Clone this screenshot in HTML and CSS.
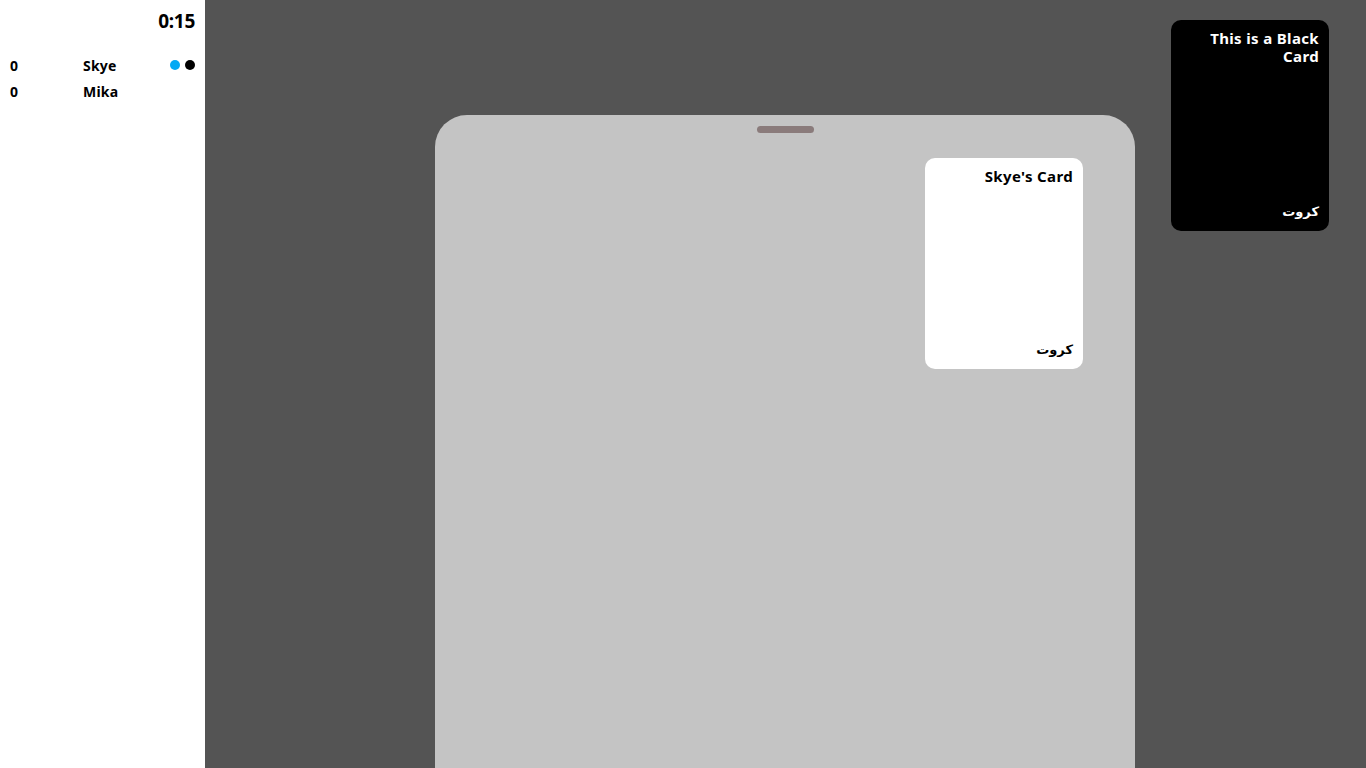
FILE: index.html
```html
<!DOCTYPE html>
<html>
<head>
<meta charset="utf-8">
<link rel="stylesheet" href="styles.css">
</head>
<body>
<div class="app">
  <aside class="sidebar">
    <div class="timer">0:15</div>
    <div class="players">
      <div class="player">
        <span class="score">0</span>
        <span class="name">Skye</span>
        <span class="dots"><span class="dot blue"></span><span class="dot black"></span></span>
      </div>
      <div class="player">
        <span class="score">0</span>
        <span class="name">Mika</span>
        <span class="dots"></span>
      </div>
    </div>
  </aside>
  <main class="table">
    <div class="black-card card">
      <div class="card-text">This is a Black Card</div>
      <div class="card-brand">كروت</div>
    </div>
    <section class="panel">
      <div class="handle"></div>
      <div class="panel-cards">
        <div class="white-card card">
          <div class="card-text">Skye's Card</div>
          <div class="card-brand">كروت</div>
        </div>
      </div>
    </section>
  </main>
</div>
</body>
</html>
```
FILE: styles.css
```css
* { box-sizing: border-box; }
html, body { margin: 0; padding: 0; height: 100%; }
body {
  font-family: "Noto Sans", "DejaVu Sans", sans-serif;
  font-weight: 700;
  background: #545454;
  overflow: hidden;
}
.app {
  display: flex;
  height: 768px;
}
.sidebar {
  width: 205px;
  flex: none;
  background: #fff;
  padding: 8px 10px 0 10px;
}
.timer {
  text-align: right;
  font-size: 19px;
  line-height: 26px;
  letter-spacing: -0.3px;
  color: #000;
}
.players {
  margin-top: 18px;
  display: flex;
  flex-direction: column;
}
.player {
  display: flex;
  align-items: center;
  height: 26px;
  font-size: 14px;
  letter-spacing: 0.2px;
  color: #000;
}
.score { width: 73px; }
.name { flex: 1; }
.dots { display: flex; gap: 5px; }
.dot { width: 10px; height: 10px; border-radius: 50%; }
.dot.blue { background: #03a9f4; }
.dot.black { background: #000; }
.table {
  flex: 1;
  position: relative;
  display: flex;
  flex-direction: column;
  align-items: center;
  padding: 115px 1px 0 0;
}
.panel {
  width: 700px;
  flex: 1;
  background: #c4c4c4;
  border-radius: 32px 32px 0 0;
  display: flex;
  flex-direction: column;
  align-items: center;
  padding-top: 11px;
}
.handle {
  width: 57px;
  height: 7px;
  border-radius: 4px;
  background: #8a7b7b;
}
.panel-cards {
  align-self: stretch;
  display: flex;
  justify-content: flex-end;
  padding: 25px 52px 0 0;
}
.card {
  width: 158px;
  height: 211px;
  border-radius: 10px;
  padding: 9px 10px 11px 10px;
  display: flex;
  flex-direction: column;
  justify-content: space-between;
  text-align: right;
  font-size: 15px;
  line-height: 18px;
  letter-spacing: 0.35px;
}
.white-card { background: #fff; color: #000; }
.black-card {
  position: absolute;
  top: 20px;
  right: 37px;
  background: #000;
  color: #fff;
}
.card-brand {
  font-size: 13px;
  line-height: 18px;
  letter-spacing: 0;
  direction: rtl;
  text-align: start;
}
```
